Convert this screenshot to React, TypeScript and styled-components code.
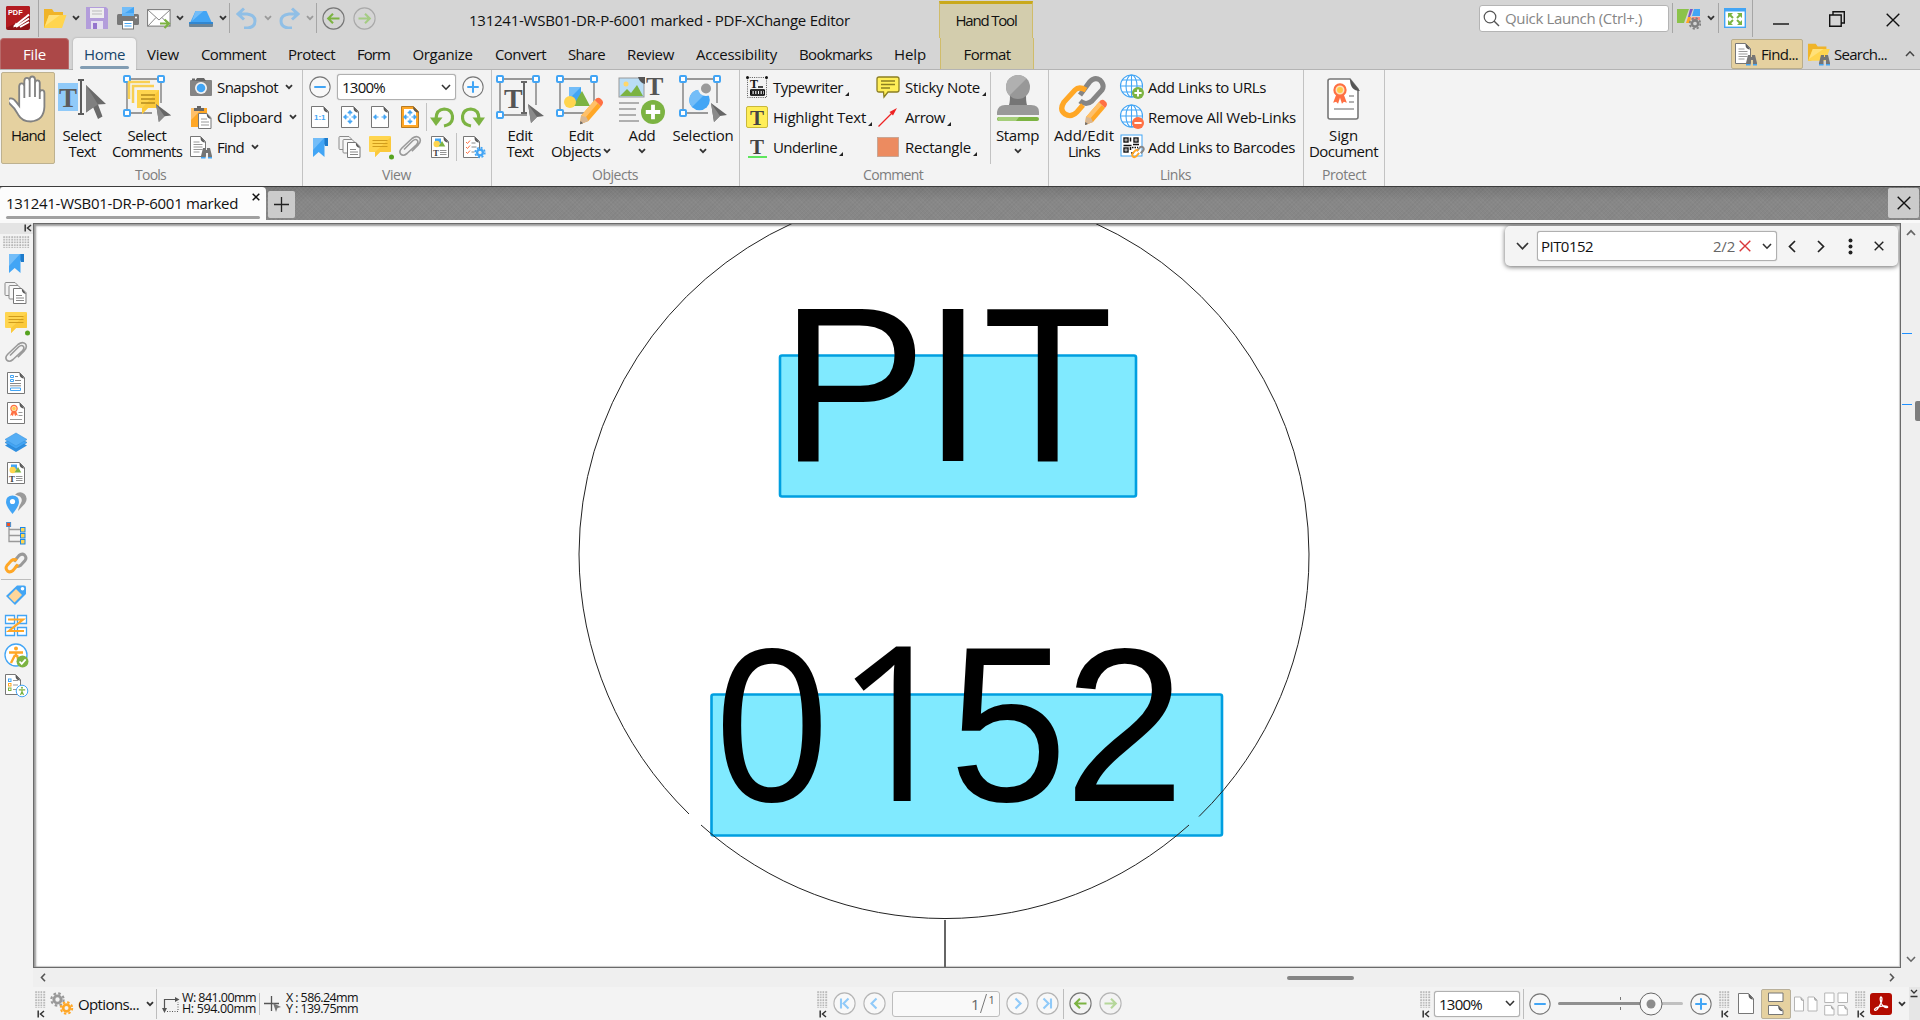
import React, { useLayoutEffect, useRef, useState } from "react";
import styled, { createGlobalStyle } from "styled-components";

const Global = createGlobalStyle`
  * { box-sizing: border-box; }
  html, body { margin: 0; padding: 0; overflow: hidden; }
  body { font-family: "Open Sans", "Noto Sans", sans-serif; font-size: 15px; color: #111; background: #f3f3f3; }
  svg { display: block; flex: none; }
`;

const BLUE = "#42a5f5";
const GREEN = "#7cb342";
const ORANGE = "#ffa726";
const YELLOW = "#ffd54f";
const RED = "#ff7043";

/* ---------- text ---------- */
const LabelBox = styled.span<{ $w: number; $c?: string; $s?: number; $h?: number }>`
  display: block;
  flex: none;
  width: ${(p) => p.$w}px;
  white-space: nowrap;
  color: ${(p) => p.$c || "#111"};
  font-size: ${(p) => p.$s || 15}px;
  line-height: ${(p) => p.$h || 16}px;
`;

/* A label whose tracking is adjusted so that it fills a given width. */
function Label({ w, c, s, h, children }: { w: number; c?: string; s?: number; h?: number; children: string }) {
  const ref = useRef<HTMLSpanElement>(null);
  const [ls, setLs] = useState(0);
  useLayoutEffect(() => {
    if (ref.current) setLs((w - ref.current.getBoundingClientRect().width) / children.length);
  }, [w, children]);
  return (
    <LabelBox $w={w} $c={c} $s={s} $h={h} style={{ letterSpacing: ls }}>
      <span ref={ref}>{children}</span>
    </LabelBox>
  );
}

/* ---------- layout primitives ---------- */
const App_ = styled.div`
  width: 1920px; height: 1020px; display: flex; flex-direction: column; overflow: hidden; background: #f3f3f3;
`;
const Slot = styled.div<{ $w: number; $h?: number; $ml?: number; $pt?: number }>`
  flex: none; display: flex; align-items: center; justify-content: center;
  width: ${(p) => p.$w}px;
  height: ${(p) => (p.$h ? p.$h + "px" : "auto")};
  margin-left: ${(p) => p.$ml || 0}px;
  padding-top: ${(p) => p.$pt || 0}px;
`;
const Sep = styled.div<{ $h: number; $ml?: number; $c?: string }>`
  flex: none; width: 1px; height: ${(p) => p.$h}px; margin-left: ${(p) => p.$ml || 0}px; background: ${(p) => p.$c || "#a6a6a6"};
`;
const Spacer = styled.div<{ $w?: number }>`
  flex: ${(p) => (p.$w ? "none" : 1)}; width: ${(p) => (p.$w ? p.$w + "px" : "auto")};
`;

const TitleBar = styled.header`
  flex: none; height: 38px; display: flex; background: #d5d5d5;
`;
const TitleRow = styled.div`display: flex; align-items: center; height: 36px;`;
const QuickLaunch = styled.div`
  flex: none; width: 190px; height: 27px; display: flex; align-items: center; gap: 5px; padding-left: 3px;
  background: #fff; border: 1px solid #b4b4b4; border-radius: 3px;
`;
const HandTool = styled.div`
  flex: none; width: 94px; height: 37px; margin-top: 1px; display: flex; justify-content: center; padding-top: 8px;
  background: #d3cdad; border: 1px solid #d0bc6a; border-bottom: 0; border-top: 3px solid #c9a91c;
`;

const TabRow = styled.nav`
  flex: none; height: 32px; display: flex; align-items: stretch; background: #d5d5d5; border-bottom: 1px solid #b4b4b4;
`;
const Tab = styled.div<{ $w: number; $kind?: "file" | "active" | "context" }>`
  flex: none; width: ${(p) => p.$w}px; display: flex; align-items: center; justify-content: center; height: 31px; padding-bottom: 0;
  ${(p) => p.$kind === "file" && "background:#ac4848;border-radius:4px 4px 0 0;border:1px solid #b86a6a;border-bottom:0;"}
  ${(p) => p.$kind === "active" && "background:#f3f3f3;border-radius:4px 4px 0 0;margin-left:4px;height:32px;box-shadow:0 0 2px #999;flex-direction:column;padding-top:7px;gap:4px;clip-path:inset(-3px -3px 0 -3px);"}
  ${(p) => p.$kind === "context" && "background:#d3cdad;border:solid #d0bc6a;border-width:0 1px;margin-left:3px;"}
`;
const TabBar = styled.div`width: 49px; height: 3px; border-radius: 2px; background: #829db3;`;
const FindToggle = styled.div`
  flex: none; width: 72px; height: 30px; margin-top: 1px; display: flex; align-items: center; gap: 3px; padding-left: 2px;
  background: #e5d1a0; border: 1px solid #b9ad8b; border-radius: 2px;
`;
const SearchToggle = styled.div`flex: none; display: flex; align-items: center; gap: 3px; margin-left: 4px;`;

const Ribbon = styled.section`
  flex: none; height: 117px; display: flex; background: #f3f3f3; border-bottom: 1px solid #3c3c3c;
`;
const Group = styled.div<{ $w: number }>`
  flex: none; width: ${(p) => p.$w}px; border-right: 1px solid #c2c2c2; display: flex; flex-direction: column;
`;
const GroupBody = styled.div`flex: none; height: 97px; padding-top: 2px; display: flex; align-items: flex-start;`;
const GroupName = styled.div<{ $pl: number }>`padding-left: ${(p) => p.$pl}px;`;
const Big = styled.div<{ $w: number; $on?: boolean; $ml?: number }>`
  flex: none; width: ${(p) => p.$w}px; height: 92px; margin-left: ${(p) => p.$ml || 0}px;
  display: flex; flex-direction: column; align-items: center;
  border: 1px solid ${(p) => (p.$on ? "#bdb190" : "transparent")}; border-radius: 2px;
  background: ${(p) => (p.$on ? "#e5d1a0" : "transparent")};
`;
const BigIcon = styled.div`height: 54px; padding-top: 2px;`;
const BigLine = styled.div`display: flex; align-items: center; height: 16px; gap: 2px;`;
const Col = styled.div<{ $w?: number; $ml?: number }>`
  flex: none; display: flex; flex-direction: column; width: ${(p) => (p.$w ? p.$w + "px" : "auto")}; margin-left: ${(p) => p.$ml || 0}px;
`;
const Line = styled.div`height: 30px; display: flex; align-items: center;`;
const Item = styled.div<{ $iw: number; $g: number }>`
  height: 30px; display: flex; align-items: center;
  > :first-child { width: ${(p) => p.$iw}px; margin-right: ${(p) => p.$g}px; }
`;
const Combo = styled.div<{ $w: number; $h: number }>`
  flex: none; width: ${(p) => p.$w}px; height: ${(p) => p.$h}px; display: flex; align-items: center; justify-content: space-between;
  padding: 0 4px 0 4px; background: #fff; border: 1px solid #b0b0b0; border-radius: 3px; box-shadow: 0 0 1px #999;
`;

const DocTabs = styled.div`
  flex: none; height: 33px; display: flex; align-items: flex-start;
  background-color: #878787;
  background-image: linear-gradient(#0000001c, #0000 14px), repeating-linear-gradient(45deg, #ffffff08 0 1px, #0000 1px 3px), repeating-linear-gradient(-45deg, #00000008 0 1px, #0000 1px 3px);
`;
const DocTab = styled.div`
  flex: none; width: 266px; height: 33px; background: #fcfcfc; border-radius: 3px 4px 0 0; padding: 0 6px; display: flex; flex-direction: column;
`;
const DocTabTop = styled.div`display: flex; height: 29px; align-items: flex-start; justify-content: space-between;`;
const DocTabLine = styled.div`height: 3px; border-radius: 2px; background: #a0a0a0;`;
const TabBtn = styled.div<{ $w: number; $h: number; $mt: number }>`
  flex: none; width: ${(p) => p.$w}px; height: ${(p) => p.$h}px; display: flex; align-items: center; justify-content: center;
  background: #cbcbcb; border-radius: 2px; margin: ${(p) => p.$mt}px 1px 0 2px;
`;
const WhiteLine = styled.div`flex: none; height: 3px; background: #f9f9f9;`;

const Main = styled.main`flex: none; height: 764px; display: flex;`;
const Side = styled.aside`
  flex: none; width: 33px; display: flex; flex-direction: column; align-items: flex-start; background: #f3f3f3;
`;
const SideHead = styled.div`width: 33px; height: 11px; margin-bottom: 2px; background: #e4e4e4; display: flex; justify-content: flex-end; padding: 1px 1px 0 0;`;
const SideGrip = styled.div`padding-left: 3px;`;
const SideIcon = styled.div`width: 32px; height: 30px; display: flex; align-items: center; justify-content: center;`;
const SideSep = styled.div`width: 30px; height: 1px; margin: 1px 0 0 1px; background: #bdbdbd;`;
const Grip = styled.div<{ $w: number; $h: number }>`
  flex: none; width: ${(p) => p.$w}px; height: ${(p) => p.$h}px;
  background: radial-gradient(circle at 1px 1px, #a8a8a8 0.5px, #0000 1px) 0 0 / 2.7px 2.7px;
`;

const DocCol = styled.div`flex: none; width: 1868px; display: flex; flex-direction: column;`;
const Canvas = styled.div`
  flex: none; height: 745px; position: relative; overflow: hidden; background: #fff;
  border: 1px solid #6a6a6a; box-shadow: inset 2px 2px 2px #9a9a9a, inset -1px -1px 1px #c8c8c8;
`;
const HScroll = styled.div`flex: none; height: 19px; background: #efefef; display: flex; align-items: center; padding: 0 6px;`;
const HThumb = styled.div`width: 67px; height: 4px; border-radius: 2px; background: #858585;`;
const VScroll = styled.div`flex: none; width: 19px; background: #efefef; display: flex; flex-direction: column; align-items: center;`;
const VTrack = styled.div`position: relative; width: 19px; height: 714px;`;
const Mark = styled.div<{ $y: number }>`position: absolute; left: 1px; top: ${(p) => p.$y}px; width: 10px; height: 1px; background: #1e90ff;`;
const VThumb = styled.div`position: absolute; left: 14px; top: 160px; width: 5px; height: 20px; border-radius: 2px 0 0 2px; background: #7d7d7d;`;
const FindPanel = styled.div`
  position: absolute; right: 2px; top: 2px; width: 393px; height: 40px; background: #f4f4f4; border-radius: 5px;
  box-shadow: 0 1px 5px #0009; display: flex; align-items: center; z-index: 2;
`;
const FindInput = styled.div`
  flex: none; width: 240px; height: 30px; margin-left: 9px; background: #fff; border: 1px solid #b0b0b0; border-radius: 3px;
  display: flex; align-items: center; padding: 0 4px 0 3px; box-shadow: 0 0 1px #999;
`;

const Status = styled.footer`flex: none; height: 33px; display: flex; background: #f3f3f3; align-items: center;`;
const GripBlock = styled.div`flex: none; width: 11px; height: 29px; display: flex; flex-direction: column; gap: 2px; padding-top: 2px;`;
const Measures = styled.div<{ $ml: number }>`flex: none; display: flex; flex-direction: column; margin-left: ${(p) => p.$ml}px; padding-bottom: 1px;`;
const PageBox = styled.div`
  flex: none; width: 108px; height: 26px; background: #f9f9f9; border: 1px solid #bdbdbd; border-radius: 3px; margin: 0 6px;
  display: flex; justify-content: flex-end; align-items: center; padding-right: 3px;
`;
const ModeOn = styled.div`
  flex: none; width: 30px; height: 30px; background: #e5d1a0; border: 1px solid #b9b09a; border-radius: 2px; display: flex; align-items: center; justify-content: center;
`;
const EndCap = styled.div`flex: none; width: 11px; height: 33px; background: #e6e6e6; padding-top: 2px;`;

/* ---------- icons ---------- */
type S = { size?: number; children?: React.ReactNode; vb?: string; w?: number; h?: number };
const Svg = ({ size = 24, w, h, vb, children }: S) => (
  <svg width={w || size} height={h || size} viewBox={vb || `0 0 ${w || size} ${h || size}`} fill="none">{children}</svg>
);
const Chev = ({ c = "#333", s = 1.8 }: { c?: string; s?: number }) => (
  <Svg w={8} h={6}><path d="M1 1.2 4 4.2 7 1.2" stroke={c} strokeWidth={s} /></Svg>
);
const BigChev = ({ c = "#333" }: { c?: string }) => (
  <Svg w={10} h={7}><path d="M1 1 5 5.2 9 1" stroke={c} strokeWidth={1.6} /></Svg>
);
const Cross = ({ size = 14, c = "#111", s = 1.4 }: { size?: number; c?: string; s?: number }) => (
  <Svg size={size}><path d={`M.7.7 ${size - 0.7} ${size - 0.7}M${size - 0.7}.7.7 ${size - 0.7}`} stroke={c} strokeWidth={s} /></Svg>
);
const Collapse = () => (
  <Svg w={8} h={8}><path d="M1.2.5V7.5M7 1 3.5 4 7 7" stroke="#333" strokeWidth={1.5} /></Svg>
);
const Corner = () => <Svg w={4} h={18}><path d="M4 14v4H0z" fill="#222" /></Svg>;
const T = ({ x, y, s, c = "#555" }: { x: number; y: number; s: number; c?: string }) => (
  <text x={x} y={y} fontSize={s} fontFamily="Liberation Serif, serif" fontWeight="bold" fill={c}>T</text>
);
const PageShape = ({ x = 3.5, y = 1.5, w = 17, h = 21, fill = "#fff", c = "#777", fold = "#555" }: { x?: number; y?: number; w?: number; h?: number; fill?: string; c?: string; fold?: string }) => {
  const f = Math.min(5, w / 3);
  return (
    <g>
      <path d={`M${x} ${y}h${w - f}l${f} ${f}v${h - f}h${-w}z`} fill={fill} stroke={c} strokeLinejoin="round" />
      <path d={`M${x + w - f} ${y}l${f} ${f + 1}q-${f} 0-${f}-${f}z`} fill={fold} />
    </g>
  );
};
const Arrow = ({ x, y, s = 1 }: { x: number; y: number; s?: number }) => (
  <g transform={`translate(${x} ${y}) scale(${s})`}>
    <path d="M0 0 16 12 9 13 3 19z" fill="#666" /><path d="M0 0 9 13 3 19z" fill="#8a8a8a" />
  </g>
);
const Pencil = ({ x, y, s = 1 }: { x: number; y: number; s?: number }) => (
  <g transform={`translate(${x} ${y}) scale(${s})`}>
    <path d="M1 17 0 25 8 22 20 8 14 2z" fill={ORANGE} /><path d="M1 17 14 2 17 5 4 20z" fill="#ffc069" />
    <path d="M14 2q3-4 6-1 4 3 0 7z" fill={RED} /><path d="M1 17 0 25 8 22 6 18z" fill="#d7b795" /><path d="M.4 22 0 25 3 24z" fill="#666" />
  </g>
);
const Frame = ({ x = 4, y = 4, w = 36, h = 36 }: { x?: number; y?: number; w?: number; h?: number }) => (
  <g>
    <path d={`M${x + w} ${y + h - 10}V${y}H${x}V${y + h}H${x + w - 9}`} stroke="#999" strokeWidth={1.8} />
    {[[x, y], [x + w, y], [x, y + h]].map(([a, b]) => (
      <rect key={`${a}-${b}`} x={a - 3} y={b - 3} width={6} height={6} rx={1} fill="#fff" stroke={BLUE} strokeWidth={2} />
    ))}
  </g>
);
const Plus = ({ x, y, r, minus }: { x: number; y: number; r: number; minus?: boolean }) => (
  <g>
    <circle cx={x} cy={y} r={r} fill={minus ? RED : GREEN} />
    <path d={`M${x - r * 0.6} ${y}h${r * 1.2}` + (minus ? "" : `M${x} ${y - r * 0.6}v${r * 1.2}`)} stroke="#fff" strokeWidth={r * 0.32} />
  </g>
);
const Binoc = ({ x, y }: { x: number; y: number }) => (
  <g transform={`translate(${x} ${y})`}>
    <path d="M2 1h3v2h1V1h3l2 8v1.5H7V6H4.500V10.500H0V9z" fill="#757575" /><path d="M0 10h4.500v1.500H0zM7 10h4v1.500H7z" fill={BLUE} />
  </g>
);
const Gear = ({ cx, cy, r, c, hole = "#f3f3f3" }: { cx: number; cy: number; r: number; c: string; hole?: string }) => (
  <g>
    <circle cx={cx} cy={cy} r={r * 0.88} stroke={c} strokeWidth={r * 0.3} strokeDasharray={`${r * 0.37} ${r * 0.321}`} />
    <circle cx={cx} cy={cy} r={r * 0.52} stroke={c} strokeWidth={r * 0.42} fill={hole} />
  </g>
);
const Folder = () => (
  <><path d="M1 3h8l2 3h9v4L4 22H1z" fill="#f0b429" /><path d="M6 9h17.500l-4.500 13H1z" fill={YELLOW} /><path d="M6 9h11L2 20z" fill="#ffe17a" /></>
);
const CircleArrow = ({ d, c = GREEN, ring = "#777", size = 23, fill = "none" }: { d: string; c?: string; ring?: string; size?: number; fill?: string }) => (
  <Svg size={size} vb="0 0 23 23"><circle cx={11.5} cy={11.5} r={10.6} stroke={ring} strokeWidth={1.1} fill={fill} /><path d={d} stroke={c} strokeWidth={2.1} /></Svg>
);
const ARL = "M17.500 11.500H6.500M11 6.700 6.200 11.500 11 16.300";
const ARR = "M5.500 11.500H16.500M12 6.700 16.800 11.500 12 16.300";
const ZoomBtn = ({ plus }: { plus?: boolean }) => (
  <CircleArrow size={22} d={"M5.500 11.500h12" + (plus ? "M11.500 5.500v12" : "")} c={BLUE} fill="#f8f8f8" />
);

const Bookmark = () => <Svg><path d="M13 3h7v8h-3z" fill="#1e7bcb" /><path d="M5 3h11.500v19L10.700 17 5 22z" fill={BLUE} /><path d="M5 3h11L5 15z" fill="#73bdf8" /></Svg>;
const Pages = () => (
  <Svg>
    <path d="M5 14.500H2q-1 0-1-1V2.500q0-1 1-1h9l3 3" stroke="#8a8a8a" /><path d="M9 18H6q-1 0-1-1V5.500q0-1 1-1h8l3 3" stroke="#8a8a8a" fill="#f8f8f8" />
    <PageShape x={9.5} y={7.5} w={12.5} h={15} /><path d="M12 14.500h6M12 17h8M12 19.500h8" stroke="#888" />
  </Svg>
);
const Comments = () => (
  <Svg w={27} h={26}>
    <path d="M3 2h20q1 0 1 1v14q0 1-1 1H13l-5 5v-5H3q-1 0-1-1V3q0-1 1-1z" fill={YELLOW} /><path d="M24 3v14q0 1-1 1H13l-5 5v-5z" fill="#fbc93b" />
    <path d="M5.500 6.500h15M5.500 9.500h15M5.500 12.500h15" stroke="#d09c1c" /><circle cx={24.500} cy={23} r={2.500} fill="#56a31f" />
  </Svg>
);
const Clip = () => (
  <Svg><path d="M6 14.500 14.500 6q3-2.500 4.700-.8 1.700 2-.8 4.600L9 18.500q-3.800 3-6.200.7-2.200-2.700.9-6L14 3.500q4.500-3.500 7.300-.7 2.400 3-.9 6.800l-6.500 6.600" stroke="#9a9a9a" strokeWidth={1.6} /></Svg>
);
const Content = () => (
  <Svg><PageShape /><rect x={7} y={3.500} width={6} height={5} fill={BLUE} /><circle cx={8.700} cy={9} r={3.200} fill={YELLOW} /><path d="M10.500 11.500 14 6l3.300 5.500z" fill={GREEN} /><T x={5} y={20.500} s={9} c="#444" /><path d="M12 15.500h6.500M12 17.500h6.500M12 19.500h6.500" stroke="#888" strokeWidth={.9} /></Svg>
);
const FitPage = ({ kind }: { kind: number }) => (
  <Svg>
    {kind === 3 ? <><path d="M3.500 1.500h12l5 5v16h-17z" fill={ORANGE} stroke="#b87b22" /><path d="M6 4h9l3 3v13H6z" fill="#fff" /><path d="M15 1.500 21 7.500q-6 0-6-6z" fill="#555" /></> : <PageShape />}
    {kind === 0 && <text x={6} y={15} fontSize={8} fontWeight="bold" fontFamily="Liberation Sans, sans-serif" fill={BLUE}>1:1</text>}
    {kind > 0 && <path d="M5.500 12 8 9.800v4.400zM18.500 12 16 9.800v4.400zM8 12h2.500M13.500 12H16" stroke={BLUE} fill={BLUE} strokeWidth={1} />}
    {(kind === 1 || kind === 3) && <path d="M12 5.500 9.800 8h4.400zM12 18.500 9.800 16h4.400zM12 8v2.500M12 13.500V16" stroke={BLUE} fill={BLUE} strokeWidth={1} />}
  </Svg>
);
const Rotate = ({ flip }: { flip?: boolean }) => (
  <Svg><g transform={flip ? "translate(24 0) scale(-1 1)" : undefined}><path d="M14 21q8.500-1.500 8.500-8.500 0-8-8.300-8.500Q6 4.500 6 14" stroke={GREEN} strokeWidth={3.200} /><path d="M0 12.500h12.500L6 21z" fill={GREEN} /></g></Svg>
);
const FindDoc = () => <Svg><PageShape x={1.500} y={1.500} w={15} h={20} /><path d="M4.500 7h6M4.500 9.500h9M4.500 12h9M4.500 14.500h9M4.500 17h6" stroke="#999" /><Binoc x={12} y={12} /></Svg>;
const Ribbonet = ({ x, y, s }: { x: number; y: number; s: number }) => (
  <g transform={`translate(${x} ${y}) scale(${s})`}><path d="M-4 5-7 13l3-1 2 2L0 8l2 6 2-2 3 1-3-8z" fill={RED} /><circle r={5.700} fill="#ffe2b8" stroke={RED} strokeWidth={2.200} /><circle r={3} fill="#ffc94a" /></g>
);
const ChainIcon = ({ size = 24 }: { size?: number }) => (
  <Svg size={size} vb="0 0 24 24"><path d="M10 10.500 15 4.500q3-2.500 5.500-.5 2.600 2.500.5 5.500l-4.200 4.700q-3 2.200-5.600.2" stroke="#999" strokeWidth={3} /><path d="M14 13.500 9 19.500q-3 2.500-5.500.5Q.9 17.500 3 14.500L7.200 9.800q3-2.200 5.600-.2" stroke={ORANGE} strokeWidth={3} /></Svg>
);
const Globe = ({ minus }: { minus?: boolean }) => (
  <Svg w={26} h={26}><g stroke={BLUE} strokeWidth={1.100}><circle cx={12.500} cy={12} r={11} fill="#fff" /><ellipse cx={12.500} cy={12} rx={5.500} ry={11} /><path d="M12.500 1v22M1.500 12h22M3.500 6h18M3.500 18h18" /></g><Plus x={19} y={19} r={6} minus={minus} /></Svg>
);
const HandIcon = () => (
  <Svg w={38} h={50}><path d="M10.500 32V12q.2-3 2.600-3t2.700 3v12V6.500q.2-3 2.700-3t2.800 3V23 5q.2-3 2.700-3t2.800 3v18V8.500q.2-2.500 2.500-2.500t2.400 2.500V25v-6.500q.3-2.500 2.400-2.500 2.400 0 2.400 3v14q-.5 14-14 15-9 0-13-7-3.500-7-9.500-12-2-3 .8-4.500 3.500-1 6.600 3.500z" transform="translate(0 -.5) scale(.97 .98)" fill="#fff" stroke="#828282" strokeWidth={1.900} /></Svg>
);
const SelectTextIcon = () => (
  <Svg w={48} h={50}><rect x={0} y={8} width={20} height={28} fill="#90caf9" /><T x={1} y={32} s={27} c="#5c5c5c" /><path d="M20 5h6M20 39h6M23 5v34" stroke="#5c5c5c" strokeWidth={2} /><path d="M28 10 48 29l-8 .5 4.500 12L40 44l-5-12-7 5.500z" fill="#6a6a6a" /><path d="M28 10 40 29.500 28 37.500z" fill="#808080" /></Svg>
);
const SelectCommentsIcon = () => (
  <Svg w={48} h={50}><Frame x={4} y={4} w={34} h={34} /><path d="M6 24V7h21M10 28V11h21" stroke="#f8cf52" strokeWidth={2.500} /><path d="M14 15h22v18H25l-6 6v-6h-5z" fill={YELLOW} /><path d="M36 15v18H25l-6 6v-6z" fill="#fbc93b" /><path d="M18 20h14M18 24h14M18 28h14" stroke="#b58a1e" strokeWidth={1.500} /><Arrow x={33} y={29} s={.95} /></Svg>
);
const EditTextIcon = () => <Svg w={48} h={50}><Frame /><T x={8} y={33} s={28} /><path d="M25 7h6M25 38h6M28 7v31" stroke="#666" strokeWidth={2} /><Arrow x={32} y={29} s={1} /></Svg>;
const EditObjIcon = () => (
  <Svg w={50} h={50}><Frame x={4} y={4} w={34} h={34} /><rect x={13} y={12} width={12} height={16} fill={BLUE} /><path d="m13 24 12-12H13z" fill="#73bdf8" /><path d="M17 31 26 16l8 15z" fill={GREEN} /><circle cx={14} cy={27} r={6} fill={YELLOW} /><Pencil x={24} y={23} s={1.050} /></Svg>
);
const AddIcon = () => (
  <Svg w={48} h={50}><rect x={1} y={3} width={25} height={19} fill="#b9ddf5" stroke="#999" /><circle cx={8} cy={9} r={2.500} fill="#ffd76a" /><path d="M2 21l7-7 4 4 6-8 6 11z" fill={GREEN} /><path d="M20 2h7v7q-5-1-7-7z" fill="#555" /><T x={28} y={20} s={26} /><path d="M1 28h20M1 34h17M1 40h17M1 46h20" stroke="#999" strokeWidth={1.600} /><Plus x={35} y={37} r={12} /></Svg>
);
const SelectionIcon = () => (
  <Svg w={48} h={50}><Frame x={4} y={4} w={34} h={34} /><circle cx={20.500} cy={25} r={10.300} fill={BLUE} /><path d="M13 32A10.300 10.300 0 0 1 20 14.700L24 21z" fill="#73bdf8" /><circle cx={27} cy={13} r={8} fill="#f3f3f3" /><circle cx={27} cy={13.500} r={5} fill="#9a9a9a" /><Arrow x={32} y={28} s={1} /></Svg>
);
const StampIcon = () => <Svg w={46} h={50}><path d="M15 20h16q0 10 2 12H13q2-2 2-12z" fill="#757575" /><circle cx={23} cy={12} r={12} fill="#989898" /><path d="M14.500 20.500A12 12 0 0 1 31.500 3.500z" fill="#b0b0b0" /><path d="M2 40v-3q1-7 8-7h26q8 0 8 7v3z" fill="#999" /><rect x={2} y={42} width={42} height={4} rx={2} fill={GREEN} /><path d="M4 42h20l-3 4H4q-3-2 0-4z" fill="#a5ce7a" /></Svg>;
const LinkBigIcon = () => (
  <Svg w={50} h={50}><path d="M21 20 31 6.500q5-5 10-1.500 5 5 2 10L33 26q-6 5-12 0" stroke="#858585" strokeWidth={5} /><path d="M27 15q-7-4-11 0L5 27q-5 8 1 12 6 4 12-2l6-7" stroke={ORANGE} strokeWidth={5.200} /><Pencil x={26} y={25} s={1} /></Svg>
);
const SignIcon = () => (
  <Svg w={36} h={50}><path d="M4 4h20l8 10v28q0 2-2 2H4q-2 0-2-2V6q0-2 2-2z" fill="#fff" stroke="#777" strokeWidth={1.600} /><path d="M24 4 34 16q-10 0-10-12z" fill="#555" /><Ribbonet x={14} y={15} s={.98} /><path d="M23 21h5M23 27h5M8 34h20" stroke="#999" strokeWidth={1.700} /></Svg>
);
const Camera = () => <Svg><rect x={1} y={5} width={22} height={16} rx={1} fill="#858585" /><path d="M3 3.500h3v2H3zM8 3h7l2 3H6z" fill="#666" /><circle cx={12} cy={13} r={6} fill="#f3f3f3" /><circle cx={12} cy={13} r={4.300} fill={BLUE} /></Svg>;
const Clipboard = () => <Svg><path d="M2 3h16v19H2z" fill={ORANGE} /><path d="M2 3h12L2 15z" fill="#ffc069" /><path d="M5 3h10v3H5zM8 1h4v3H8z" fill="#666" /><PageShape x={9.500} y={8.500} w={12.500} h={15} /><path d="M12 14h6M12 17h8M12 20h8" stroke="#999" /></Svg>;
const Checklist = () => <Svg><PageShape x={1.500} w={16} /><path d="m4 7 1.500 1.500L8 5.500M4 12l1.500 1.500L8 10.500M4 17l1.500 1.500L8 15.500" stroke={RED} /><path d="M9.500 8h4M9.500 12h5M9.500 17h3" stroke="#888" /><Gear cx={18} cy={17.500} r={5.500} c={BLUE} /></Svg>;
const Typewriter = () => <Svg><rect x={2.500} y={2.500} width={19} height={20} stroke="#555" strokeDasharray="1 1.200" /><circle cx={2.500} cy={2.500} r={1.500} fill="#111" /><circle cx={21.500} cy={2.500} r={1.500} fill="#111" /><T x={5} y={12.500} s={12} c="#111" /><path d="M13 12h5M5.500 15h14M5.500 20h14" stroke="#111" strokeWidth={1.300} /><path d="M5.500 15h14v5h-14z" stroke="#111" /><path d="M6 17.500h14" stroke="#111" strokeWidth={3} strokeDasharray="1.500 1.200" /></Svg>;
const Highlight = () => <Svg><rect x={1.500} y={1.500} width={21} height={21} rx={1.500} fill="#ffee58" stroke="#c9b83a" /><T x={5} y={19.500} s={21} c="#444" /></Svg>;
const Underline = () => <Svg><T x={5} y={19} s={21} c="#444" /><path d="M3 22h19" stroke="#1de01d" strokeWidth={1.400} /></Svg>;
const Sticky = () => <Svg w={24} h={24}><path d="M3 2h18q2 0 2 2v11q0 2-2 2h-9l-4 5-.5-5H3q-2 0-2-2V4q0-2 2-2z" fill="#ffee58" stroke="#8c7f22" strokeWidth={1.300} /><path d="M5 6h14M5 9.500h14M5 13h9" stroke="#8c7f22" strokeWidth={1.300} /></Svg>;
const RedArrow = () => <Svg><path d="M2.500 21.500 18 6" stroke="#e22" strokeWidth={1.300} /><path d="M21 3 13.500 7l3.500 3.500z" fill="#e22" /></Svg>;
const Rect = () => <Svg><rect x={1.500} y={2.500} width={21} height={19} fill="#ec8b60" stroke="#c0a090" strokeWidth={.8} /></Svg>;
const Qr = () => (
  <Svg w={26} h={26}><rect x={2} y={1} width={21} height={21} fill="#fff" stroke={BLUE} /><g stroke="#111" strokeWidth={1.400}><rect x={5} y={4} width={4} height={4} /><rect x={15} y={4} width={4} height={4} /><rect x={5} y={14} width={4} height={4} /></g><path d="M6.500 6h1M16.500 6h1M6.500 16h1M11.500 3.500v4M4.500 11.500h8M11.500 13v3M14 10.500h6M12 19h3" stroke="#111" strokeWidth={1.500} /><path d="M13 13.500h6" stroke="#111" strokeWidth={1.500} strokeDasharray="1.500 1" /><g transform="translate(12 11) scale(.58)"><path d="M10 10.500 15 4.500q3-2.500 5.500-.5 2.600 2.500.5 5.500l-4.200 4.700" stroke="#888" strokeWidth={3.500} /><path d="M14 13.500 9 19.500q-3 2.500-5.500.5Q.9 17.500 3 14.500L7.200 9.800q3-2.200 5.600-.2" stroke={ORANGE} strokeWidth={3.500} /></g></Svg>
);

/* ---------- sections ---------- */
const AppLogo = () => (
  <Svg><rect width={24} height={24} rx={2} fill="#8e1216" /><path d="M0 2q0-2 2-2h20q2 0 2 2v8L0 22z" fill="#b31b20" /><text x={2} y={8.500} fontSize={7.300} fontWeight="bold" fontFamily="Liberation Sans, sans-serif" fill="#fff">PDF</text><path d="M8 20.500 20 11l3-2.500M10 21l13-8.500M14 21l9-5" stroke="#fff" strokeWidth={2} /><path d="m7 21.500 3-5 2 3z" fill="#fff" /></Svg>
);

const Title = () => (
  <TitleBar>
    <TitleRow>
      <Slot $w={24} $ml={6}><AppLogo /></Slot>
      <Sep $h={38} $ml={8} />
      <Slot $w={24} $ml={4}><Svg><Folder /></Svg></Slot>
      <Slot $w={8} $ml={5}><Chev /></Slot>
      <Slot $w={24} $ml={5}><Svg><path d="M1 1h20l2 2v20H1z" fill="#b39ddb" /><rect x={5} y={2} width={14} height={10} fill="#eee" /><path d="M7 5h10M7 8h10" stroke="#bbb" /><rect x={6} y={15} width={12} height={8} fill="#e4dff0" /><rect x={8} y={17} width={4} height={6} fill="#9575cd" /></Svg></Slot>
      <Slot $w={24} $ml={7}><Svg><rect x={6} y={1} width={12} height={9} fill={BLUE} /><path d="M6 1h12L6 9z" fill="#73bdf8" /><rect x={1} y={8} width={22} height={11} rx={1.500} fill="#787878" /><path d="M6 7h12v3H6z" fill="#64b5f6" /><rect x={6.500} y={14.500} width={11} height={8.500} fill="#fff" stroke="#777" /><path d="M8.500 17.500h7M8.500 20h7" stroke={BLUE} /><circle cx={20} cy={11.500} r={1} fill="#fff" /></Svg></Slot>
      <Slot $w={25} $ml={6}><Svg><rect x={.6} y={3.600} width={22.500} height={16.500} fill="#fff" stroke="#777" /><path d="M1 4l11 10L23 4M1 20l8-8.500M23 20l-8-8.500" stroke="#888" /><path d="M13 17.500h8M17.500 13.500l4.500 4-4.500 4.500" stroke={GREEN} strokeWidth={2.200} /></Svg></Slot>
      <Slot $w={8} $ml={5}><Chev /></Slot>
      <Slot $w={24} $ml={5}><Svg><path d="M6.500 5h11L23 17H1z" fill={BLUE} /><path d="M6.500 5h8L3 15z" fill="#73bdf8" /><rect x={0} y={16} width={24} height={5} rx={1} fill="#6d8596" /><path d="M0 17h24" stroke="#1e88e5" strokeWidth={1.500} /></Svg></Slot>
      <Slot $w={8} $ml={6}><Chev /></Slot>
      <Sep $h={30} $ml={2} />
      <Slot $w={22} $ml={6}><Svg w={22} h={22}><path d="M2 7h9q8 1 8 7t-7 7H8M8 1.500 2 7l6 5.500" stroke="#90bfe6" strokeWidth={3} /></Svg></Slot>
      <Slot $w={8} $ml={6}><Chev c="#9a9a9a" /></Slot>
      <Slot $w={22} $ml={6}><Svg w={22} h={22}><path d="M20 7h-9q-8 1-8 7t7 7h4M14 1.500 20 7l-6 5.500" stroke="#90bfe6" strokeWidth={3} /></Svg></Slot>
      <Slot $w={8} $ml={6}><Chev c="#9a9a9a" /></Slot>
      <Sep $h={30} $ml={2} />
      <Slot $w={23} $ml={5}><CircleArrow d={ARL} /></Slot>
      <Slot $w={23} $ml={8}><CircleArrow d={ARR} c="#a5cc84" ring="#a9a9a9" /></Slot>
      <Slot $w={381} $ml={93} $pt={3}><Label w={381}>131241-WSB01-DR-P-6001 marked - PDF-XChange Editor</Label></Slot>
    </TitleRow>
    <Spacer $w={89} />
    <HandTool><Label w={61}>Hand Tool</Label></HandTool>
    <Spacer />
    <TitleRow>
      <QuickLaunch>
        <Svg w={17} h={17}><circle cx={7} cy={7} r={5.800} stroke="#555" strokeWidth={1.200} /><path d="m11 11 5 5" stroke="#555" strokeWidth={1.400} /></Svg>
        <Label w={137} c="#868686">Quick Launch (Ctrl+.)</Label>
      </QuickLaunch>
      <Sep $h={30} $ml={3} />
      <Slot $w={24} $ml={4}><Svg><path d="M0 3h12L7 17H0z" fill="#8bc34a" /><path d="M13 3h3l-3 8h-2z" fill="#7e57c2" /><path d="M17 3h6v7h-8z" fill={BLUE} /><path d="M11 11h3l-1 6H9z" fill={ORANGE} /><path d="M15 11h8v3h-9z" fill="#ff8a80" /><Gear cx={18} cy={17.500} r={6} c="#808080" hole="#d5d5d5" /></Svg></Slot>
      <Slot $w={8} $ml={6}><Chev /></Slot>
      <Sep $h={30} $ml={3} />
      <Slot $w={22} $ml={5}><Svg w={22} h={20}><rect x={.7} y={.7} width={20.600} height={18.600} fill="#fff" stroke={BLUE} strokeWidth={1.400} /><rect width={22} height={3.500} fill={BLUE} /><path d="M4 5h5L4 10zM18 5v5l-5-5zM4 17v-5l5 5zM18 17h-5l5-5z" fill={GREEN} /><path d="m5 6 4 4M17 6l-4 4M5 16l4-4M17 16l-4-4" stroke={GREEN} strokeWidth={2} /></Svg></Slot>
      <Sep $h={38} $ml={6} />
      <Slot $w={16} $ml={20} $pt={12}><Svg w={16} h={2}><path d="M0 1h16" stroke="#111" strokeWidth={1.400} /></Svg></Slot>
      <Slot $w={16} $ml={40} $pt={2}><Svg w={16} h={16}><path d="M.7 4h11.500v11.300H.7zM4 4V.7h11.300V12H12" stroke="#111" strokeWidth={1.400} /></Svg></Slot>
      <Slot $w={14} $ml={41} $pt={3}><Cross /></Slot>
      <Spacer $w={20} />
    </TitleRow>
  </TitleBar>
);

const TABS: [string, number, number][] = [
  ["View", 54, 32], ["Comment", 87, 65], ["Protect", 69, 47], ["Form", 55, 33], ["Organize", 83, 60], ["Convert", 73, 51],
  ["Share", 59, 37], ["Review", 69, 47], ["Accessibility", 103, 81], ["Bookmarks", 95, 73], ["Help", 54, 32],
];

const Tabs = () => (
  <TabRow>
    <Tab $w={69} $kind="file"><Label w={23} c="#fff">File</Label></Tab>
    <Tab $w={63} $kind="active"><Label w={41} c="#17456b">Home</Label><TabBar /></Tab>
    {TABS.map(([t, w, tw]) => <Tab key={t} $w={w}><Label w={tw}>{t}</Label></Tab>)}
    <Tab $w={94} $kind="context"><Label w={47}>Format</Label></Tab>
    <Spacer />
    <FindToggle><FindDoc /><Label w={37}>Find...</Label></FindToggle>
    <SearchToggle><Svg><g transform="translate(0 -1) scale(.97 .9)"><Folder /></g><Binoc x={12} y={12} /></Svg><Label w={53}>Search...</Label></SearchToggle>
    <Slot $w={10} $ml={18}><Svg w={10} h={7}><path d="M1 6 5 1.800 9 6" stroke="#444" strokeWidth={1.500} /></Svg></Slot>
    <Spacer $w={5} />
  </TabRow>
);

const BigButton = ({ w, icon, a, aw, b, bw, on, ml, chev, inline }: { w: number; icon: React.ReactNode; a: string; aw: number; b?: string; bw?: number; on?: boolean; ml?: number; chev?: boolean; inline?: boolean }) => (
  <Big $w={w} $on={on} $ml={ml}>
    <BigIcon>{icon}</BigIcon>
    <BigLine><Label w={aw}>{a}</Label></BigLine>
    {b && <BigLine><Label w={bw || aw}>{b}</Label>{inline && <Chev />}</BigLine>}
    {chev && <BigLine><Chev /></BigLine>}
  </Big>
);

const Tool = ({ icon, iw, g, t, w, tail }: { icon: React.ReactNode; iw: number; g: number; t: string; w: number; tail?: "chev" | "corner" }) => (
  <Item $iw={iw} $g={g}>
    <Slot $w={iw}>{icon}</Slot><Label w={w}>{t}</Label>
    {tail === "chev" && <Slot $w={8} $ml={7}><Chev /></Slot>}
    {tail === "corner" && <Slot $w={4} $ml={2}><Corner /></Slot>}
  </Item>
);

const RibbonBar = () => (
  <Ribbon>
    <Group $w={303}>
      <GroupBody>
        <BigButton w={54} ml={1} on icon={<HandIcon />} a="Hand" aw={34} />
        <BigButton w={54} icon={<SelectTextIcon />} a="Select" aw={39} b="Text" bw={27} />
        <BigButton w={76} icon={<SelectCommentsIcon />} a="Select" aw={39} b="Comments" bw={70} />
        <Col $ml={4}>
          <Tool iw={24} g={4} icon={<Camera />} t="Snapshot" w={61} tail="chev" />
          <Tool iw={24} g={4} icon={<Clipboard />} t="Clipboard" w={65} tail="chev" />
          <Tool iw={24} g={4} icon={<FindDoc />} t="Find" w={27} tail="chev" />
        </Col>
      </GroupBody>
      <GroupName $pl={135}><Label w={31} c="#7d7d7d" s={14}>Tools</Label></GroupName>
    </Group>
    <Group $w={189}>
      <GroupBody>
        <Col $ml={2}>
          <Line>
            <Slot $w={22} $ml={4}><ZoomBtn /></Slot>
            <Slot $w={119} $ml={6}><Combo $w={119} $h={26}><Label w={43}>1300%</Label><BigChev /></Combo></Slot>
            <Slot $w={22} $ml={6}><ZoomBtn plus /></Slot>
          </Line>
          <Line>
            {[0, 1, 2, 3].map((k) => <Slot key={k} $w={30}><FitPage kind={k} /></Slot>)}
            <Sep $h={28} $ml={1} $c="#c2c2c2" />
            <Slot $w={30}><Rotate /></Slot><Slot $w={31}><Rotate flip /></Slot>
          </Line>
          <Line>
            <Slot $w={30}><Bookmark /></Slot><Slot $w={30}><Pages /></Slot><Slot $w={30}><Comments /></Slot><Slot $w={30}><Clip /></Slot><Slot $w={30}><Content /></Slot>
            <Sep $h={28} $ml={1} $c="#c2c2c2" />
            <Slot $w={34}><Checklist /></Slot>
          </Line>
        </Col>
      </GroupBody>
      <GroupName $pl={79}><Label w={29} c="#7d7d7d" s={14}>View</Label></GroupName>
    </Group>
    <Group $w={248}>
      <GroupBody>
        <BigButton w={56} icon={<EditTextIcon />} a="Edit" aw={25} b="Text" bw={27} />
        <BigButton w={66} icon={<EditObjIcon />} a="Edit" aw={25} b="Objects" bw={50} inline />
        <BigButton w={56} icon={<AddIcon />} a="Add" aw={27} chev />
        <BigButton w={66} icon={<SelectionIcon />} a="Selection" aw={61} chev />
      </GroupBody>
      <GroupName $pl={100}><Label w={46} c="#7d7d7d" s={14}>Objects</Label></GroupName>
    </Group>
    <Group $w={309}>
      <GroupBody>
        <Col $w={131} $ml={5}>
          <Tool iw={24} g={4} icon={<Typewriter />} t="Typewriter" w={70} tail="corner" />
          <Tool iw={24} g={4} icon={<Highlight />} t="Highlight Text" w={93} tail="corner" />
          <Tool iw={24} g={4} icon={<Underline />} t="Underline" w={64} tail="corner" />
        </Col>
        <Col $w={114}>
          <Tool iw={24} g={5} icon={<Sticky />} t="Sticky Note" w={75} tail="corner" />
          <Tool iw={24} g={5} icon={<RedArrow />} t="Arrow" w={40} tail="corner" />
          <Tool iw={24} g={5} icon={<Rect />} t="Rectangle" w={66} tail="corner" />
        </Col>
        <Sep $h={92} $c="#c2c2c2" />
        <BigButton w={53} icon={<StampIcon />} a="Stamp" aw={43} chev />
      </GroupBody>
      <GroupName $pl={123}><Label w={60} c="#7d7d7d" s={14}>Comment</Label></GroupName>
    </Group>
    <Group $w={255}>
      <GroupBody>
        <BigButton w={70} icon={<LinkBigIcon />} a="Add/Edit" aw={60} b="Links" bw={32} />
        <Col>
          <Tool iw={26} g={3} icon={<Globe />} t="Add Links to URLs" w={118} />
          <Tool iw={26} g={3} icon={<Globe minus />} t="Remove All Web-Links" w={148} />
          <Tool iw={26} g={3} icon={<Qr />} t="Add Links to Barcodes" w={147} />
        </Col>
      </GroupBody>
      <GroupName $pl={111}><Label w={31} c="#7d7d7d" s={14}>Links</Label></GroupName>
    </Group>
    <Group $w={81}>
      <GroupBody><BigButton w={79} icon={<SignIcon />} a="Sign" aw={29} b="Document" bw={69} /></GroupBody>
      <GroupName $pl={18}><Label w={44} c="#7d7d7d" s={14}>Protect</Label></GroupName>
    </Group>
  </Ribbon>
);

const Sidebar = () => (
  <Side>
    <SideHead><Collapse /></SideHead>
    <SideGrip><Grip $w={27} $h={12} /></SideGrip>
    <SideIcon><Bookmark /></SideIcon>
    <SideIcon><Pages /></SideIcon>
    <SideIcon><Comments /></SideIcon>
    <SideIcon><Clip /></SideIcon>
    <SideIcon><Svg><PageShape /><path d="M6.500 4.500h3v2h-3zM6.500 8.500h3v2h-3zM6.500 17h10v2.500h-10z" stroke={BLUE} /><path d="M11 5.500h3M11 9.500h6M6 12.500h11M6 14.800h11" stroke="#888" /></Svg></SideIcon>
    <SideIcon><Svg><PageShape /><Ribbonet x={10} y={7.500} s={.55} /><path d="M14.500 11.500h4M14.500 14.500h4M6 18.500h12" stroke="#999" /></Svg></SideIcon>
    <SideIcon><Svg><path d="M1 14.500 12 21l11-6.500-11-6.500z" fill="#2f8fe0" /><path d="M1 11.500 12 18l11-6.500-11-6.500z" fill={BLUE} stroke="#2a7fc9" strokeWidth={.6} /><path d="M1 8.500 12 15l11-6.500L12 2z" fill="#55aef5" stroke="#3b93dd" strokeWidth={.6} /></Svg></SideIcon>
    <SideIcon><Content /></SideIcon>
    <SideIcon><Svg><path d="M11 3.500q5-4 9.500-.5 4 4 .5 9.500L14 20q1-5 3-8 2-4-1-6.500z" fill="#9a9a9a" /><path d="M8.500 23Q2 15 2 11q0-6.500 6.500-6.500T15 11q0 4-6.500 12z" fill={BLUE} /><circle cx={8.500} cy={10.500} r={2.600} fill="#fff" /></Svg></SideIcon>
    <SideIcon><Svg><path d="M5 3.500v17h13M5 8.500h13M5 14.500h13" stroke="#999" strokeWidth={1.300} /><rect x={2.600} y={1.500} width={4} height={4} fill="#f4511e" stroke="#4a90d0" />{[6.500, 12.500, 18.500].map((y) => <rect key={y} x={16.500} y={y} width={4.500} height={4.500} fill={YELLOW} stroke="#1e88e5" />)}</Svg></SideIcon>
    <SideIcon><ChainIcon /></SideIcon>
    <SideSep />
    <SideIcon><Svg><path d="M13 2.500h7q2 0 2 2V11L11 22 2 13z" fill={BLUE} /><path d="M12 6 18 12 10.500 19.500 4.500 13.500z" fill="#ffd699" /><circle cx={18.500} cy={5.800} r={1.800} fill="#fff" /></Svg></SideIcon>
    <SideIcon><Svg><path d="M1.500 2.500h9v8h-9zM13.500 2.500h9v8h-9zM1.500 14.500h9v8h-9zM13.500 14.500h9v8h-9z" stroke={BLUE} strokeWidth={1.300} fill="#fff" /><path d="M4 6.500h15L5 18h15" stroke={ORANGE} strokeWidth={2.200} /></Svg></SideIcon>
    <SideIcon><Svg w={25} h={25}><circle cx={12} cy={12} r={11} fill="#fff" stroke={BLUE} strokeWidth={1.300} /><circle cx={12} cy={5.500} r={2} fill={ORANGE} /><path d="M5 9.500h14M12 9v5M11 12l-4 8M13 12l2 8" stroke={ORANGE} strokeWidth={2.400} /><circle cx={18.500} cy={18.500} r={6} fill={GREEN} /><path d="m15.500 18.500 2.200 2.300 4-4.500" stroke="#fff" strokeWidth={1.800} /></Svg></SideIcon>
    <SideIcon><Svg w={25} h={25}><PageShape x={1.500} y={1.500} w={15} h={20} /><rect x={4.500} y={6} width={2.500} height={2.500} stroke={BLUE} /><rect x={4.500} y={10.500} width={2.500} height={2.500} stroke={ORANGE} /><rect x={4.500} y={15} width={2.500} height={2.500} stroke={GREEN} /><path d="M9 7.500h5M9 12h5M9 16.500h3" stroke="#999" /><circle cx={18} cy={18} r={5.800} fill="#fff" stroke={BLUE} /><circle cx={18} cy={14.800} r={1} fill={GREEN} /><path d="M14.800 16.800h6.400M18 16.500v2.500M18 18.500l-1.500 3.500M18 18.500l1.500 3.500" stroke={GREEN} strokeWidth={1.200} /></Svg></SideIcon>
  </Side>
);

/* Each character of the tag is set on its own: [character, x, baseline, horizontal scale]. */
const GLYPHS: [string, number, number, number][] = [
  ["P", 780, 461, 1], ["I", 922.5, 461, 1], ["T", 982.6, 461, 0.971],
  ["0", 715.1, 801, 0.93], ["5", 949, 801, 0.968], ["2", 1064.3, 801, 0.984],
];

const Drawing = () => (
  <svg width={1866} height={743} viewBox="34 224 1866 743" fill="none">
    <rect x={780} y={355.500} width={356} height={141} rx={2} fill="#80eaff" stroke="#009fe0" strokeWidth={2.600} />
    <rect x={711.500} y={694.500} width={510.500} height={141} rx={2} fill="#80eaff" stroke="#009fe0" strokeWidth={2.600} />
    <path d="M689 814A365 365 0 0 1 579 554A365 365 0 0 1 793 223" stroke="#222" strokeWidth={1} />
    <path d="M1094.500 223A365 365 0 0 1 1309 554A365 365 0 0 1 1199 816.500" stroke="#222" strokeWidth={1} />
    <path d="M701 825A365 365 0 0 0 1189 825" stroke="#222" strokeWidth={1} />
    <path d="M945 920V967" stroke="#666" strokeWidth={2} />
    <g fontFamily="Liberation Sans, Arial, sans-serif" fontSize={220} fill="#000">
      {GLYPHS.map(([ch, x, y, sx]) => <text key={ch} transform={`translate(${x} ${y}) scale(${sx} 1)`}>{ch}</text>)}
      <text x={835} y={801} fontFamily="Open Sans, Noto Sans, sans-serif" fontSize={215.500}>1</text>
    </g>
  </svg>
);

const Find = () => (
  <FindPanel>
    <Slot $w={12} $ml={11}><Svg w={13} h={9}><path d="M1 1 6.500 6.800 12 1" stroke="#333" strokeWidth={1.700} /></Svg></Slot>
    <FindInput>
      <Label w={52}>PIT0152</Label><Spacer />
      <Label w={22} c="#666">2/2</Label>
      <Slot $w={12} $ml={4}><Cross size={12} c="#d9383a" /></Slot>
      <Slot $w={10} $ml={11}><BigChev /></Slot>
    </FindInput>
    <Slot $w={8} $ml={11}><Svg w={8} h={13}><path d="M7 1 1.500 6.500 7 12" stroke="#222" strokeWidth={1.700} /></Svg></Slot>
    <Slot $w={8} $ml={21}><Svg w={8} h={13}><path d="M1 1 6.500 6.500 1 12" stroke="#222" strokeWidth={1.700} /></Svg></Slot>
    <Slot $w={6} $ml={22}><Svg w={5} h={17}><circle cx={2.500} cy={2.500} r={2} fill="#222" /><circle cx={2.500} cy={8.500} r={2} fill="#222" /><circle cx={2.500} cy={14.500} r={2} fill="#222" /></Svg></Slot>
    <Slot $w={10} $ml={21}><Cross size={10} c="#222" /></Slot>
  </FindPanel>
);

const ToolbarGrip = () => <GripBlock><Grip $w={11} $h={17} /><Slot $w={12}><Collapse /></Slot></GripBlock>;

const StatusBar = () => (
  <Status>
    <Spacer $w={35} /><ToolbarGrip />
    <Slot $w={24} $ml={4}><Svg><Gear cx={7.500} cy={7.500} r={7} c="#999" /><Gear cx={16.500} cy={16} r={6.500} c={ORANGE} /></Svg></Slot>
    <Slot $w={61} $ml={4}><Label w={61}>Options...</Label></Slot>
    <Slot $w={8} $ml={7}><Chev /></Slot>
    <Sep $h={30} $ml={2} $c="#bdbdbd" />
    <Slot $w={18} $ml={5} $pt={2}><Svg w={18} h={18}><path d="M2.500 15V3.500H15" stroke="#555" strokeWidth={1.200} /><path d="M13 1l4.500 2.500L13 6zM0 12h5l-2.500 5z" fill="#555" /><path d="M5 15.500h11V6" stroke="#555" strokeDasharray="1 1.500" /></Svg></Slot>
    <Measures $ml={2}><Label w={74} s={12.500} h={11}>W: 841.00mm</Label><Label w={74} s={12.500} h={11}>H: 594.00mm</Label></Measures>
    <Sep $h={22} $ml={3} $c="#bdbdbd" />
    <Slot $w={18} $ml={4}><Svg w={18} h={16}><path d="M0 7.500h15M7.500 0v15" stroke="#555" strokeWidth={1.300} /><path d="M9 7l8 4-3.500 1L12 16z" fill="#777" /></Svg></Slot>
    <Measures $ml={4}><Label w={72} s={12.500} h={11}>X : 586.24mm</Label><Label w={72} s={12.500} h={11}>Y : 139.75mm</Label></Measures>
    <Spacer $w={459} />
    <ToolbarGrip />
    <Slot $w={23} $ml={5}><CircleArrow d="M8 6.500v10M15.500 6.500l-5 5 5 5" c="#90caf9" ring="#b5b5b5" fill="#f8f8f8" /></Slot>
    <Slot $w={23} $ml={7}><CircleArrow d="M13.500 6.500l-5 5 5 5" c="#90caf9" ring="#b5b5b5" fill="#f8f8f8" /></Slot>
    <PageBox><Label w={5} c="#666">1</Label><Slot $w={20}><Svg w={17} h={22}><path d="M8.500 1 2.500 20" stroke="#777" /><text x={10.500} y={11} fontSize={11} fontFamily="Open Sans, sans-serif" fill="#555">1</text></Svg></Slot></PageBox>
    <Slot $w={23}><CircleArrow d="M9.500 6.500l5 5-5 5" c="#90caf9" ring="#b5b5b5" fill="#f8f8f8" /></Slot>
    <Slot $w={23} $ml={7}><CircleArrow d="M15 6.500v10M7.500 6.500l5 5-5 5" c="#90caf9" ring="#b5b5b5" fill="#f8f8f8" /></Slot>
    <Sep $h={30} $ml={4} $c="#bdbdbd" />
    <Slot $w={23} $ml={5}><CircleArrow d={ARL} /></Slot>
    <Slot $w={23} $ml={7}><CircleArrow d={ARR} c="#b5d79a" ring="#b5b5b5" /></Slot>
    <Spacer />
    <ToolbarGrip />
    <Slot $w={86} $ml={3}><Combo $w={86} $h={26}><Label w={43}>1300%</Label><BigChev /></Combo></Slot>
    <Sep $h={30} $ml={3} $c="#bdbdbd" />
    <Slot $w={22} $ml={5}><ZoomBtn /></Slot>
    <Slot $w={125} $ml={7}><Svg w={125} h={24}><path d="M1.500 11.500H92" stroke="#8f8f8f" strokeWidth={3} strokeLinecap="round" /><path d="M92 11.500h31.500" stroke="#c0c0c0" strokeWidth={3} strokeLinecap="round" /><path d="M62.500 5v3M62.500 15v3" stroke="#777" /><circle cx={93} cy={12} r={11} fill="#f8f8f8" stroke="#666" /><circle cx={93} cy={12} r={4.500} fill="#8c8c8c" /></Svg></Slot>
    <Slot $w={22} $ml={7}><ZoomBtn plus /></Slot>
    <Spacer $w={7} /><ToolbarGrip />
    <Slot $w={17} $ml={8}><Svg w={17} h={21}><PageShape x={.5} y={.5} w={15} h={20} /></Svg></Slot>
    <Spacer $w={6} /><ModeOn><Svg w={18} h={24}><path d="M1.500 1v8.500h14.500V1" stroke="#777" fill="#fff" /><path d="M1.500 1h14.500" stroke="#777" /><PageShape x={1.500} y={13.500} w={14.500} h={9} /></Svg></ModeOn>
    <Slot $w={24} $ml={3}><Svg><PageShape x={.5} y={5} w={9} h={14} c="#b5b5b5" fold="#a0a0a0" /><PageShape x={14} y={5} w={9} h={14} c="#b5b5b5" fold="#a0a0a0" /></Svg></Slot>
    <Slot $w={24} $ml={6}><Svg><path d="M.7 1v9.500H10V1zM14 1v9.500h9.500V1z" fill="#fff" stroke="#b5b5b5" /><PageShape x={.7} y={13.500} w={9.300} h={9.500} c="#b5b5b5" fold="#a0a0a0" /><PageShape x={14} y={13.500} w={9.300} h={9.500} c="#b5b5b5" fold="#a0a0a0" /></Svg></Slot>
    <Spacer $w={7} /><ToolbarGrip />
    <Slot $w={22} $ml={4}><Svg w={22} h={22}><rect width={22} height={22} rx={3} fill="#b30b00" /><path d="M10.800 4q1.800.2.800 4.500-1.500 4.500-4.600 8-2 1.500-2.500.2 0-1.500 5-3 5-1.500 7.700-.3 1.200 1-.5 1.300-3.200-.3-5.500-4.500-1.800-5-.4-6.200z" stroke="#fff" strokeWidth={1.300} /></Svg></Slot>
    <Slot $w={8} $ml={6}><Chev /></Slot>
    <Spacer $w={3} />
    <EndCap><Svg w={10} h={10}><path d="M2 1l3 3 3-3M1.500 7.500h7" stroke="#333" strokeWidth={1.300} /></Svg></EndCap>
  </Status>
);

export default function App() {
  return (
    <App_>
      <Global />
      <Title />
      <Tabs />
      <RibbonBar />
      <DocTabs>
        <DocTab>
          <DocTabTop><Label w={232} h={33}>131241-WSB01-DR-P-6001 marked</Label><Slot $w={8} $h={20}><Cross size={8} s={1.500} /></Slot></DocTabTop>
          <DocTabLine />
        </DocTab>
        <TabBtn $w={27} $h={27} $mt={4}><Svg w={15} h={15}><path d="M0 7.500h15M7.500 0v15" stroke="#222" strokeWidth={1.300} /></Svg></TabBtn>
        <Spacer />
        <TabBtn $w={31} $h={30} $mt={1}><Cross /></TabBtn>
      </DocTabs>
      <WhiteLine />
      <Main>
        <Sidebar />
        <DocCol>
          <Canvas><Drawing /><Find /></Canvas>
          <HScroll>
            <Slot $w={7}><Svg w={6} h={9}><path d="M5 .8 1.500 4.500 5 8.200" stroke="#555" strokeWidth={1.600} /></Svg></Slot>
            <Spacer $w={1241} /><HThumb /><Spacer />
            <Slot $w={7}><Svg w={6} h={9}><path d="M1 .8 4.500 4.500 1 8.200" stroke="#555" strokeWidth={1.600} /></Svg></Slot>
          </HScroll>
        </DocCol>
        <VScroll>
          <Slot $w={18} $h={18}><Svg w={10} h={7}><path d="M1 6 5 1.800 9 6" stroke="#666" strokeWidth={1.700} /></Svg></Slot>
          <VTrack><Mark $y={92} /><Mark $y={163} /><VThumb /></VTrack>
          <Slot $w={18} $h={8}><BigChev c="#666" /></Slot>
        </VScroll>
      </Main>
      <StatusBar />
    </App_>
  );
}
